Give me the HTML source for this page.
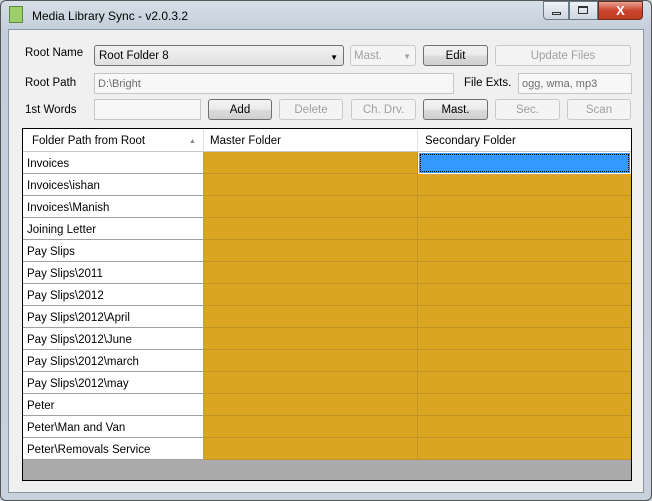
<!DOCTYPE html><html><head><style>
*{box-sizing:border-box;margin:0;padding:0}
body{width:652px;height:501px;background:#c9d3de;font-family:"Liberation Sans",sans-serif;font-size:11px;position:relative;overflow:hidden}
.a{position:absolute}
.frame{left:0;top:0;width:652px;height:501px;border:1px solid #555;border-radius:6px;background:linear-gradient(#d7dfe8,#c3ceda 30px,#c8d2dd)}
.client{left:8px;top:29px;width:636px;height:464px;background:#f0f0f0;border:1px solid #8a96a3}
.lbl{color:#000;font-size:11.5px}
.btn{border:1px solid #707070;border-radius:3px;background:linear-gradient(#f2f2f2,#ebebeb 50%,#dddddd 50%,#cfcfcf);text-align:center;line-height:20px;font-size:11.5px}
.dis{border:1px solid #c8c8c8;border-radius:3px;background:#f4f4f4;color:#a0a0a0;text-align:center;line-height:20px;font-size:11.5px}
.tb{border:1px solid #c6c6c6;background:#f7f7f7;color:#6d6d6d;padding-left:3px;line-height:20px;font-size:11px}
.grid{left:22px;top:128px;width:610px;height:353px;border:1px solid #000;background:#ababab;overflow:hidden}
.row{position:absolute;left:0;height:22px;width:608px}
.c1{position:absolute;left:0;width:181px;height:22px;background:#fff;border-right:1px solid #a0a0a0;border-bottom:1px solid #a0a0a0;padding-left:4px;line-height:25px;font-size:11.5px}
.c2{position:absolute;left:181px;width:214px;height:22px;background:#daa520;border-right:1px solid #c0922a;border-bottom:1px solid #c0922a}
.c3{position:absolute;left:395px;width:213px;height:22px;background:#daa520;border-bottom:1px solid #c0922a}
</style></head><body>
<div class="a frame"></div>
<div class="a" style="left:9px;top:6px;width:14px;height:17px;background:#9ccf6a;border:1px solid #5a8a3a"></div>
<div class="a" style="left:32px;top:9px;font-size:12px">Media Library Sync - v2.0.3.2</div>
<div class="a" style="left:543px;top:1px;width:26px;height:19px;border:1px solid #6b7a8a;border-radius:0 0 0 4px;background:linear-gradient(#eef2f7,#cdd6e0)"></div>
<div class="a" style="left:552px;top:12px;width:9px;height:3px;border:1px solid #333"></div>
<div class="a" style="left:569px;top:1px;width:29px;height:19px;border:1px solid #6b7a8a;background:linear-gradient(#eef2f7,#cdd6e0)"></div>
<div class="a" style="left:578px;top:6px;width:10px;height:8px;border:1px solid #333;border-top-width:2px"></div>
<div class="a" style="left:598px;top:1px;width:45px;height:19px;border:1px solid #6b2a20;border-radius:0 0 4px 0;background:linear-gradient(#e8a393,#c9452e 50%,#c23a22);color:#fff;font-weight:bold;text-align:center;line-height:17px;font-size:13px">X</div>
<div class="a client"></div>
<div class="a lbl" style="left:25px;top:47px">Root Name</div>
<div class="a" style="left:94px;top:45px;width:250px;height:21px;border:1px solid #707070;border-radius:3px;background:linear-gradient(#f2f2f2,#e0e0e0);padding-left:4px;line-height:20px;font-size:11.5px">Root Folder 8<span class="a" style="right:5px;top:2px;font-size:8px">▼</span></div>
<div class="a dis" style="left:350px;top:45px;width:66px;height:21px;text-align:left;padding-left:3px">Mast.<span class="a" style="right:4px;top:1px;font-size:8px">▼</span></div>
<div class="a btn" style="left:423px;top:45px;width:65px;height:21px">Edit</div>
<div class="a dis" style="left:495px;top:45px;width:136px;height:21px">Update Files</div>
<div class="a lbl" style="left:25px;top:77px">Root Path</div>
<div class="a tb" style="left:94px;top:73px;width:360px;height:21px">D:\Bright</div>
<div class="a lbl" style="left:464px;top:77px">File Exts.</div>
<div class="a tb" style="left:518px;top:73px;width:114px;height:21px">ogg, wma, mp3</div>
<div class="a lbl" style="left:25px;top:104px">1st Words</div>
<div class="a tb" style="left:94px;top:99px;width:107px;height:21px"></div>
<div class="a btn" style="left:208px;top:99px;width:64px;height:21px">Add</div>
<div class="a dis" style="left:279px;top:99px;width:64px;height:21px">Delete</div>
<div class="a dis" style="left:351px;top:99px;width:65px;height:21px">Ch. Drv.</div>
<div class="a btn" style="left:423px;top:99px;width:65px;height:21px">Mast.</div>
<div class="a dis" style="left:495px;top:99px;width:65px;height:21px">Sec.</div>
<div class="a dis" style="left:567px;top:99px;width:64px;height:21px">Scan</div>
<div class="a grid">
<div class="row" style="top:0;height:23px;background:#fff;border-bottom:1px solid #c8c8c8">
<div class="a" style="left:0;width:181px;height:22px;border-right:1px solid #e0e0e0;padding-left:9px;line-height:24px;font-size:11.5px">Folder Path from Root<span class="a" style="left:166px;top:1px;font-size:7px;color:#888">▲</span></div>
<div class="a" style="left:181px;width:214px;height:22px;border-right:1px solid #e0e0e0;padding-left:6px;line-height:24px;font-size:11.5px">Master Folder</div>
<div class="a" style="left:395px;width:213px;height:22px;padding-left:7px;line-height:24px;font-size:11.5px">Secondary Folder</div>
</div>
<div class="row" style="top:23px"><div class="c1">Invoices</div><div class="c2"></div><div class="c3" style="background:#3399ff;border:1px solid #fff;outline:1px dotted #000;outline-offset:-3px"></div></div>
<div class="row" style="top:45px"><div class="c1">Invoices\ishan</div><div class="c2"></div><div class="c3"></div></div>
<div class="row" style="top:67px"><div class="c1">Invoices\Manish</div><div class="c2"></div><div class="c3"></div></div>
<div class="row" style="top:89px"><div class="c1">Joining Letter</div><div class="c2"></div><div class="c3"></div></div>
<div class="row" style="top:111px"><div class="c1">Pay Slips</div><div class="c2"></div><div class="c3"></div></div>
<div class="row" style="top:133px"><div class="c1">Pay Slips\2011</div><div class="c2"></div><div class="c3"></div></div>
<div class="row" style="top:155px"><div class="c1">Pay Slips\2012</div><div class="c2"></div><div class="c3"></div></div>
<div class="row" style="top:177px"><div class="c1">Pay Slips\2012\April</div><div class="c2"></div><div class="c3"></div></div>
<div class="row" style="top:199px"><div class="c1">Pay Slips\2012\June</div><div class="c2"></div><div class="c3"></div></div>
<div class="row" style="top:221px"><div class="c1">Pay Slips\2012\march</div><div class="c2"></div><div class="c3"></div></div>
<div class="row" style="top:243px"><div class="c1">Pay Slips\2012\may</div><div class="c2"></div><div class="c3"></div></div>
<div class="row" style="top:265px"><div class="c1">Peter</div><div class="c2"></div><div class="c3"></div></div>
<div class="row" style="top:287px"><div class="c1">Peter\Man and Van</div><div class="c2"></div><div class="c3"></div></div>
<div class="row" style="top:309px"><div class="c1">Peter\Removals Service</div><div class="c2"></div><div class="c3"></div></div>
</div>
</body></html>
